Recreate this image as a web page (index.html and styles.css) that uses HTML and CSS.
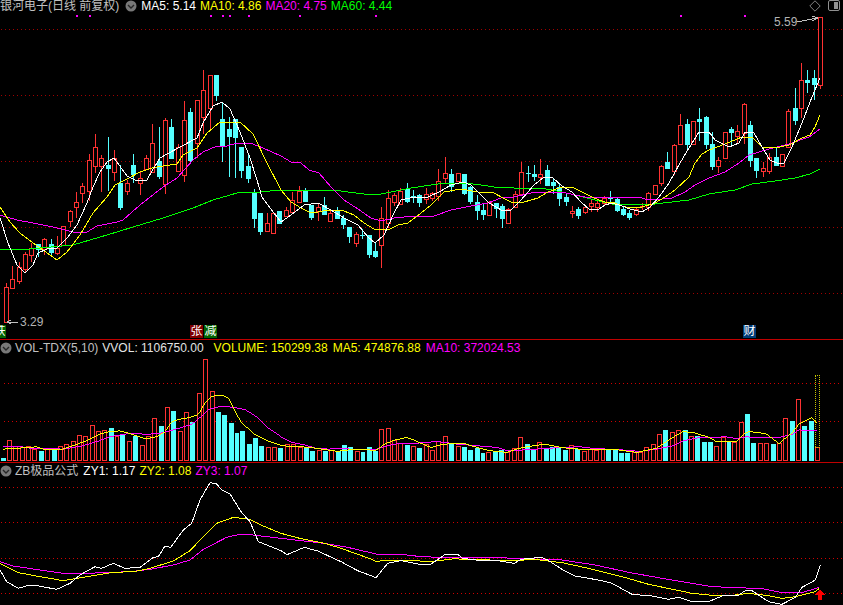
FILE: index.html
```html
<!DOCTYPE html>
<html lang="zh-CN">
<head>
<meta charset="utf-8">
<title>银河电子 K线</title>
<link rel="stylesheet" href="styles.css">
</head>
<body>
<main class="terminal">
  <section class="pane pane-main">
    <svg class="plot" id="plot-main" viewBox="0 0 843 339"></svg>
    <header class="legend">
      <span class="name title">银河电子(日线 前复权)</span>
      <svg class="chev" viewBox="0 0 12 12"><circle cx="6" cy="6" r="5.5"/><path d="M3 5l3 3 3-3"/></svg>
      <span class="white">MA5: 5.14</span>
      <span class="yellow">MA10: 4.86</span>
      <span class="magenta">MA20: 4.75</span>
      <span class="green">MA60: 4.44</span>
    </header>
    <div class="tools">
      <svg class="tool" viewBox="0 0 12 12"><path class="diamond" d="M6 .8L11.2 6 6 11.2.8 6z"/></svg>
      <svg class="tool" viewBox="0 0 12 12"><rect class="frame" x=".5" y=".5" width="11" height="10" rx="1.5"/><rect class="fill" x="6" y="2" width="4" height="7"/></svg>
    </div>
    <span class="price price-high">5.59</span>
    <span class="price price-low">3.29</span>
    <span class="badge badge-tie">铁</span>
    <span class="badge badge-zhang">张</span>
    <span class="badge badge-jian">减</span>
    <span class="badge badge-cai">财</span>
  </section>
  <section class="pane pane-vol">
    <svg class="plot" id="plot-vol" viewBox="0 340 843 123"></svg>
    <header class="legend">
      <svg class="chev" viewBox="0 0 12 12"><circle cx="6" cy="6" r="5.5"/><path d="M3 5l3 3 3-3"/></svg>
      <span class="name">VOL-TDX(5,10)</span>
      <span class="white-soft">VVOL: 1106750.00</span>
      <span class="yellow nudge-6">VOLUME: 150299.38</span>
      <span class="yellow nudge-1">MA5: 474876.88</span>
      <span class="magenta nudge-1">MA10: 372024.53</span>
    </header>
  </section>
  <section class="pane pane-zb">
    <svg class="plot" id="plot-zb" viewBox="0 463 843 142"></svg>
    <header class="legend">
      <svg class="chev" viewBox="0 0 12 12"><circle cx="6" cy="6" r="5.5"/><path d="M3 5l3 3 3-3"/></svg>
      <span class="name">ZB极品公式</span>
      <span class="white nudge-1">ZY1: 1.17</span>
      <span class="yellow">ZY2: 1.08</span>
      <span class="magenta">ZY3: 1.07</span>
    </header>
  </section>
</main>
<script src="chart.js"></script>
</body>
</html>
```
FILE: styles.css
```css
* { box-sizing: border-box; }
html, body { margin: 0; height: 100%; background: #000; overflow: hidden; }
body { font: 12px/12px "Liberation Sans", "Noto Sans CJK SC", sans-serif; color: #c0c0c0; }
.terminal { width: 843px; height: 605px; display: flex; flex-direction: column; }
.pane { position: relative; flex: none; }
.pane-main { height: 340px; border-bottom: 1px solid #c00000; }
.pane-vol { height: 123px; border-bottom: 1px solid #c00000; }
.pane-zb { height: 142px; }
.plot { display: block; width: 843px; height: 100%; }
.plot * { shape-rendering: crispEdges; }
.grid { stroke: #a00000; stroke-width: 1; stroke-dasharray: 1 3; }
.pane-vol .grid, .pane-zb .grid { stroke: #d00000; }
.wick { stroke-width: 1; }
.up { stroke: #ff3232; fill: #000; }
.down { stroke: #54ffff; fill: #54ffff; }
.mline { fill: none; stroke-width: 1; }
.l-white { stroke: #fff; }
.l-yellow { stroke: #ff0; }
.l-magenta { stroke: #f0f; }
.l-green { stroke: #0f0; }
.signal { fill: #f0f; }
.projected { fill: none; stroke: #c8c800; stroke-dasharray: 1 1; }
.pointer { fill: none; stroke: #c0c0c0; }
.arrow-up { fill: #ff0000; }
.legend { position: absolute; left: 0; top: 0; display: flex; align-items: center; gap: 4px; height: 12px; white-space: nowrap; }
.pane-vol .legend { top: 2px; }
.pane-zb .legend { top: 2px; }
.pane-vol .chev, .pane-zb .chev { margin-right: -1px; }
.chev { width: 12px; height: 12px; flex: none; }
.chev circle { fill: #787878; }
.chev path { fill: none; stroke: #262626; stroke-width: 1.4; }
.name { color: #c0c0c0; }
.title { margin-right: 2px; }
.white { color: #fff; }
.white-soft { color: #e4e4e4; }
.yellow { color: #ff0; }
.magenta { color: #f0f; }
.green { color: #0f0; }
.nudge-1 { margin-left: 1px; }
.nudge-6 { margin-left: 6px; }
.tools { position: absolute; right: 3px; top: 0; display: flex; gap: 7px; }
.tool { width: 12px; height: 12px; }
.diamond { fill: none; stroke: #808080; }
.frame { fill: none; stroke: #909090; }
.fill { fill: #909090; }
.price { position: absolute; color: #b4b4b4; }
.price-high { left: 774px; top: 16px; }
.price-low { left: 20px; top: 316px; }
.badge { position: absolute; top: 325px; width: 13px; height: 13px; font-size: 12px; line-height: 13px; text-align: center; color: #fff; overflow: hidden; }
.badge-tie { left: -7px; background: #006400; }
.badge-zhang { left: 190px; background: #800000; }
.badge-jian { left: 204px; background: #006400; }
.badge-cai { left: 743px; background: #003c78; }
```
FILE: chart.js
```js
var NS = "http://www.w3.org/2000/svg";
var STEP = 6.36;
function X(i) { return Math.round(6 + STEP * i); }
function el(parent, name, attrs) {
  var n = document.createElementNS(NS, name);
  for (var k in attrs) n.setAttribute(k, attrs[k]);
  parent.appendChild(n);
  return n;
}
/* [up?, high, bodyTop, bodyBottom, low] */
var candles = [
[1,283,287,322,322],[1,266,279,288,288],[1,262,267,281,283],[1,252,254,269,271],[1,243,248,255,261],
[0,244,244,249,256],[1,238,239,249,254],[0,239,244,252,254],[1,236,248,253,254],[1,226,226,245,245],
[1,210,211,221,226],[1,192,202,207,217],[1,183,186,193,202],[1,154,160,191,200],[1,134,147,166,172],
[1,155,158,166,191],[0,137,165,168,190],[1,150,158,172,180],[0,165,183,207,209],[1,180,183,191,194],
[0,154,165,174,182],[1,172,178,183,194],[1,155,158,169,169],[1,124,143,172,172],[0,127,161,176,178],
[1,118,120,184,193],[0,119,127,158,158],[1,144,147,171,171],[1,101,120,175,181],[0,108,112,160,161],
[1,100,100,143,157],[1,70,90,117,133],[1,75,75,108,128],[0,75,75,95,100],[0,102,119,146,161],
[0,117,129,136,176],[0,119,119,137,177],[0,147,147,170,177],[0,155,166,178,182],[0,189,193,218,227],
[0,213,213,231,234],[1,213,223,231,231],[1,213,213,233,233],[0,211,211,223,223],[1,207,210,216,216],
[1,192,200,212,212],[1,186,191,202,202],[0,188,190,201,201],[0,205,205,217,219],[1,203,207,211,220],
[0,197,205,214,214],[1,210,213,221,221],[0,207,210,218,218],[0,215,218,224,228],[0,227,227,236,242],
[1,232,234,243,246],[0,229,235,236,238],[0,235,235,254,257],[0,243,251,256,257],[1,207,218,245,267],
[1,190,198,223,227],[1,193,195,202,205],[1,188,191,204,204],[0,183,189,201,202],[0,190,196,197,202],
[0,194,195,202,206],[1,188,194,199,203],[1,192,193,198,200],[1,169,181,196,200],[1,157,173,178,182],
[0,169,174,186,191],[1,173,173,181,181],[0,174,174,193,194],[0,186,187,201,203],[0,195,202,210,219],
[0,203,210,214,219],[1,201,202,215,215],[0,203,203,208,217],[0,204,206,218,227],[1,208,209,223,223],
[1,191,194,207,207],[1,162,172,194,195],[0,166,173,174,181],[0,165,174,176,180],[1,159,174,177,183],
[0,165,170,185,185],[0,178,182,185,193],[0,183,187,198,205],[0,193,197,201,205],[1,206,211,213,217],
[0,207,209,215,218],[1,205,207,212,213],[1,200,203,206,211],[1,200,203,207,211],[1,196,198,203,204],
[0,191,198,199,201],[0,198,199,210,211],[0,207,209,214,215],[0,210,213,217,219],[1,207,209,214,215],
[1,203,206,207,209],[1,192,193,207,210],[1,185,185,194,194],[1,165,166,183,185],[0,152,162,168,168],
[1,144,145,171,174],[1,114,125,144,144],[0,119,124,144,150],[1,121,121,144,144],[0,108,119,121,140],
[0,116,117,144,148],[0,132,144,166,169],[1,157,160,166,172],[1,132,132,158,158],[0,127,129,132,144],
[1,125,131,136,143],[1,103,104,133,143],[0,121,125,160,166],[0,158,158,170,177],[1,162,168,171,176],
[1,153,157,171,173],[0,148,157,165,165],[1,154,154,166,166],[1,109,111,147,147],[0,88,108,120,124],
[1,63,80,108,117],[0,70,80,82,92],[0,70,78,84,99],[1,17,17,85,88]
];
/* bar tops, read in 3x crop units: [up?, top] starting from index -1 */
var vols = [
[0,372],[1,318],[1,335],[1,340],[1,337],[1,345],[0,350],[1,345],[0,345],[1,335],[1,330],[1,322],[1,303],[1,306],[1,273],[1,292],[1,288],[0,282],[1,305],[0,302],[1,320],[0,305],[1,333],[1,305],[1,252],[0,276],[1,220],[0,231],[1,292],[1,235],[0,265],[1,175],[1,72],[1,168],[0,233],[0,243],[0,267],[0,297],[0,291],[0,330],[0,312],[0,335],[1,340],[1,340],[0,342],
[1,331],[1,331],[1,338],[0,342],[0,350],[1,348],[0,350],[1,348],[0,352],[0,333],[0,340],[1,352],[0,353],[0,340],[0,350],[1,286],[1,283],[1,318],[1,328],[0,333],[1,337],[0,342],[1,330],[1,348],[1,320],[1,307],[0,328],[1,337],[0,338],[0,348],[0,343],[0,357],[1,353],[0,352],[0,348],[1,355],[1,343],[1,310],[0,330],[0,347],[1,325],[0,343],[0,340],[0,340],
[0,348],[1,334],[0,345],[1,352],[1,345],[1,348],[1,343],[0,348],[0,347],[0,357],[0,357],[1,355],[1,355],[1,340],[1,331],[1,300],[0,288],[1,295],[1,289],[0,288],[1,307],[0,306],[0,324],[0,324],[1,337],[1,308],[0,323],[1,323],[1,265],[0,240],[0,327],[1,328],[1,328],[0,330],[1,328],[1,253],[0,261],[1,193],[0,276],[0,261],[1,340]
];
/* lines: screen x,y pairs */
var ma5 = [0,218,8,243,17,265,25,273,33,265,38,253,47,249,57,248,67,238,77,225,87,203,93,187,100,172,107,162,114,158,127,176,135,180,147,180,152,171,160,158,167,154,180,147,197,138,203,123,213,106,222,102,230,109,240,132,250,158,257,180,262,197,270,208,281,222,291,215,304,205,318,203,331,210,344,218,358,225,368,237,375,243,384,235,394,213,401,200,414,197,428,197,439,192,451,185,463,182,471,185,481,195,489,203,503,211,511,210,521,200,534,185,544,177,553,178,562,186,572,192,582,203,589,209,599,209,605,205,612,203,622,206,630,209,642,212,650,207,659,197,669,183,680,163,689,148,699,132,709,132,715,140,729,147,739,143,745,132,754,133,762,147,770,160,779,164,784,163,792,147,802,123,812,97,820,78];
var ma10 = [0,207,10,222,20,233,33,243,43,250,57,260,67,252,80,235,93,213,107,197,115,185,127,179,140,172,152,168,163,166,177,164,183,155,197,148,207,133,220,122,230,122,240,122,253,134,267,163,281,190,291,202,301,208,309,212,318,212,328,210,344,211,354,215,364,223,374,229,388,230,398,225,408,223,421,213,431,205,444,192,461,189,478,192,494,193,503,198,511,202,524,202,538,198,548,192,562,187,574,188,582,192,592,197,599,200,605,202,615,203,622,206,629,208,642,207,655,203,665,197,675,190,689,177,695,163,702,154,709,150,725,144,742,137,752,137,762,147,775,148,789,145,802,138,810,135,815,127,820,115];
var ma20 = [0,215,17,220,33,223,53,227,73,232,87,232,97,226,117,222,123,220,140,205,163,187,177,178,193,160,203,152,217,146,227,146,237,143,250,143,263,148,281,156,291,162,301,163,309,170,319,173,331,187,344,200,358,209,371,218,381,221,394,218,414,216,434,216,451,210,471,206,488,203,501,198,514,197,531,193,548,192,562,192,575,195,590,198,602,197,639,197,645,199,662,199,672,198,685,192,695,185,709,178,725,172,739,163,749,155,769,149,789,144,809,137,820,129];
var ma60 = [0,249,20,250,40,248,73,245,107,235,133,227,163,218,193,208,213,200,237,193,260,192,281,190,334,190,348,192,364,194,376,195,391,192,411,188,438,184,464,183,481,185,494,187,514,188,541,188,562,192,575,195,595,200,612,204,629,205,655,204,672,202,689,200,709,194,735,190,752,184,775,181,795,178,810,174,820,169];
/* crop data: x origin, y origin, zoomed pairs */
function crops(list) {
  var out = [];
  list.forEach(function (c) {
    for (var i = 0; i < c[2].length; i += 2) out.push(c[0] + c[2][i] / 3, c[1] + c[2][i + 1] / 3);
  });
  return out;
}
var volY = crops([[0,335,[0,345,50,342,100,338,120,345,180,345,210,335,250,320,290,300,320,292,350,290,380,297,410,307,430,314,460,308,490,290,510,262,530,255,560,250,590,240,610,205,630,185,660,182,680,190,700,230,720,265,760,300,800,320]],[281,335,[0,335,60,338,100,342,140,348,170,352,190,348,220,347,285,348,310,330,340,318,375,310,400,318,430,332,450,340,480,332,510,328,550,328,590,340,630,350,680,355,720,342,770,333,800,331]],[562,335,[0,340,30,343,80,347,120,347,170,347,230,355,250,350,290,342,330,315,370,292,400,295,450,310,470,322,530,322,560,295,570,292,620,298,660,328,700,295,720,270,757,250,775,265]]]);
var volM = crops([[0,335,[0,337,50,337,80,342,180,345,240,335,290,320,320,308,350,303,380,298,440,300,480,296,520,285,570,270,600,245,620,225,660,215,690,218,730,225,770,250,800,280]],[281,335,[0,310,30,325,70,333,100,342,140,345,180,343,230,347,285,345,310,337,350,328,400,328,430,325,470,322,530,330,590,335,650,340,680,350,740,347]],[562,335,[0,340,60,338,100,343,180,347,240,352,290,345,340,335,370,320,420,310,500,308,530,313,560,308,600,310,660,310,700,300,720,287,775,289]]]);
var zbW = crops([[0,460,[0,330,20,365,55,385,85,376,105,376,170,388,210,370,240,345,285,320,305,325,340,310,375,325,420,322,460,292,475,290,495,258,512,262,550,210,575,190,600,120,630,68,650,72,665,90,690,102,725,158,750,185,775,245]],[281,460,[0,272,18,284,70,262,110,273,180,305,230,332,285,353,320,310,360,302,420,314,450,312,490,285,530,283,545,295,600,302,650,302,700,310,720,298,780,292,800,300]],[562,460,[0,328,40,348,120,362,150,370,210,403,270,408,320,418,350,412,390,425,440,425,480,408,530,405,550,392,570,392,620,425,660,433,700,412,720,382,760,360,775,316]]]);
var zbY = crops([[0,460,[0,310,55,338,120,350,190,362,230,355,290,345,340,337,400,335,450,325,520,303,570,272,600,240,650,190,700,172,750,178,790,198]],[281,460,[0,220,60,236,130,250,180,265,270,297,285,304,310,302,400,302,450,305,520,296,550,298,700,302,760,298]],[562,460,[0,308,80,325,180,350,260,373,390,400,440,405,520,405,560,400,620,407,660,415,700,410,760,395,772,385]]]);
var zbM = crops([[0,460,[0,305,40,318,120,330,190,340,260,340,390,335,450,328,520,315,570,300,610,268,680,232,710,225,750,224]],[281,460,[0,235,60,242,130,250,200,262,290,283,370,284,420,290,480,292,650,293]],[562,460,[0,300,100,315,200,337,300,355,450,380,600,386,660,398,720,398,772,382]]]);

function grid(svg, ys) {
  ys.forEach(function (y) { el(svg, "line", { "class": "grid", x1: 1, x2: 843, y1: y + 0.5, y2: y + 0.5 }); });
}
function line(svg, pts, cls) {
  el(svg, "polyline", { "class": "mline " + cls, points: pts.join(" ") });
}

var main = document.getElementById("plot-main");
grid(main, [29, 95, 161, 227, 293]);
[76, 89, 210, 222, 229, 248, 299, 375, 680, 744].forEach(function (x) {
  el(main, "rect", { "class": "signal", x: x, y: 15, width: 2, height: 2 });
});
candles.forEach(function (c, i) {
  var x = X(i), cls = c[0] ? "up" : "down";
  el(main, "line", { "class": "wick " + cls, x1: x + 0.5, x2: x + 0.5, y1: c[1], y2: c[4] + 1 });
  if (c[3] - c[2] <= 1) {
    el(main, "line", { "class": "wick " + cls, x1: x - 2, x2: x + 3, y1: c[2] + 0.5, y2: c[2] + 0.5 });
  } else if (c[0]) {
    el(main, "rect", { "class": cls, x: x - 1.5, y: c[2] + 0.5, width: 4, height: c[3] - c[2] });
  } else {
    el(main, "rect", { "class": cls, style: "stroke:none", x: x - 2, y: c[2], width: 5, height: c[3] - c[2] + 1 });
  }
});
line(main, ma60, "l-green");
line(main, ma20, "l-magenta");
line(main, ma10, "l-yellow");
line(main, ma5, "l-white");
el(main, "path", { "class": "pointer", d: "M797 22L817 18M812 16L818 18L812 21" });
el(main, "path", { "class": "pointer", d: "M18 322H8M11 320L7 322L11 324" });

var vol = document.getElementById("plot-vol");
grid(vol, [383, 422]);
vols.forEach(function (v, k) {
  var x = X(k - 1), top = Math.round(335 + v[1] / 3);
  if (v[0]) el(vol, "rect", { "class": "up", x: x - 1.5, y: top + 0.5, width: 4, height: 461 - top });
  else el(vol, "rect", { "class": "down", style: "stroke:none", x: x - 2, y: top, width: 5, height: 462 - top });
});
el(vol, "rect", { "class": "projected", x: 818.5, y: 375.5, width: 4, height: 73 });
line(vol, volM, "l-magenta");
line(vol, volY, "l-yellow");

var zb = document.getElementById("plot-zb");
grid(zb, [487, 522, 558, 593]);
line(zb, zbM, "l-magenta");
line(zb, zbY, "l-yellow");
line(zb, zbW, "l-white");
el(zb, "path", { "class": "arrow-up", d: "M820 589L825 595H822V600H818V595H815Z" });
```
